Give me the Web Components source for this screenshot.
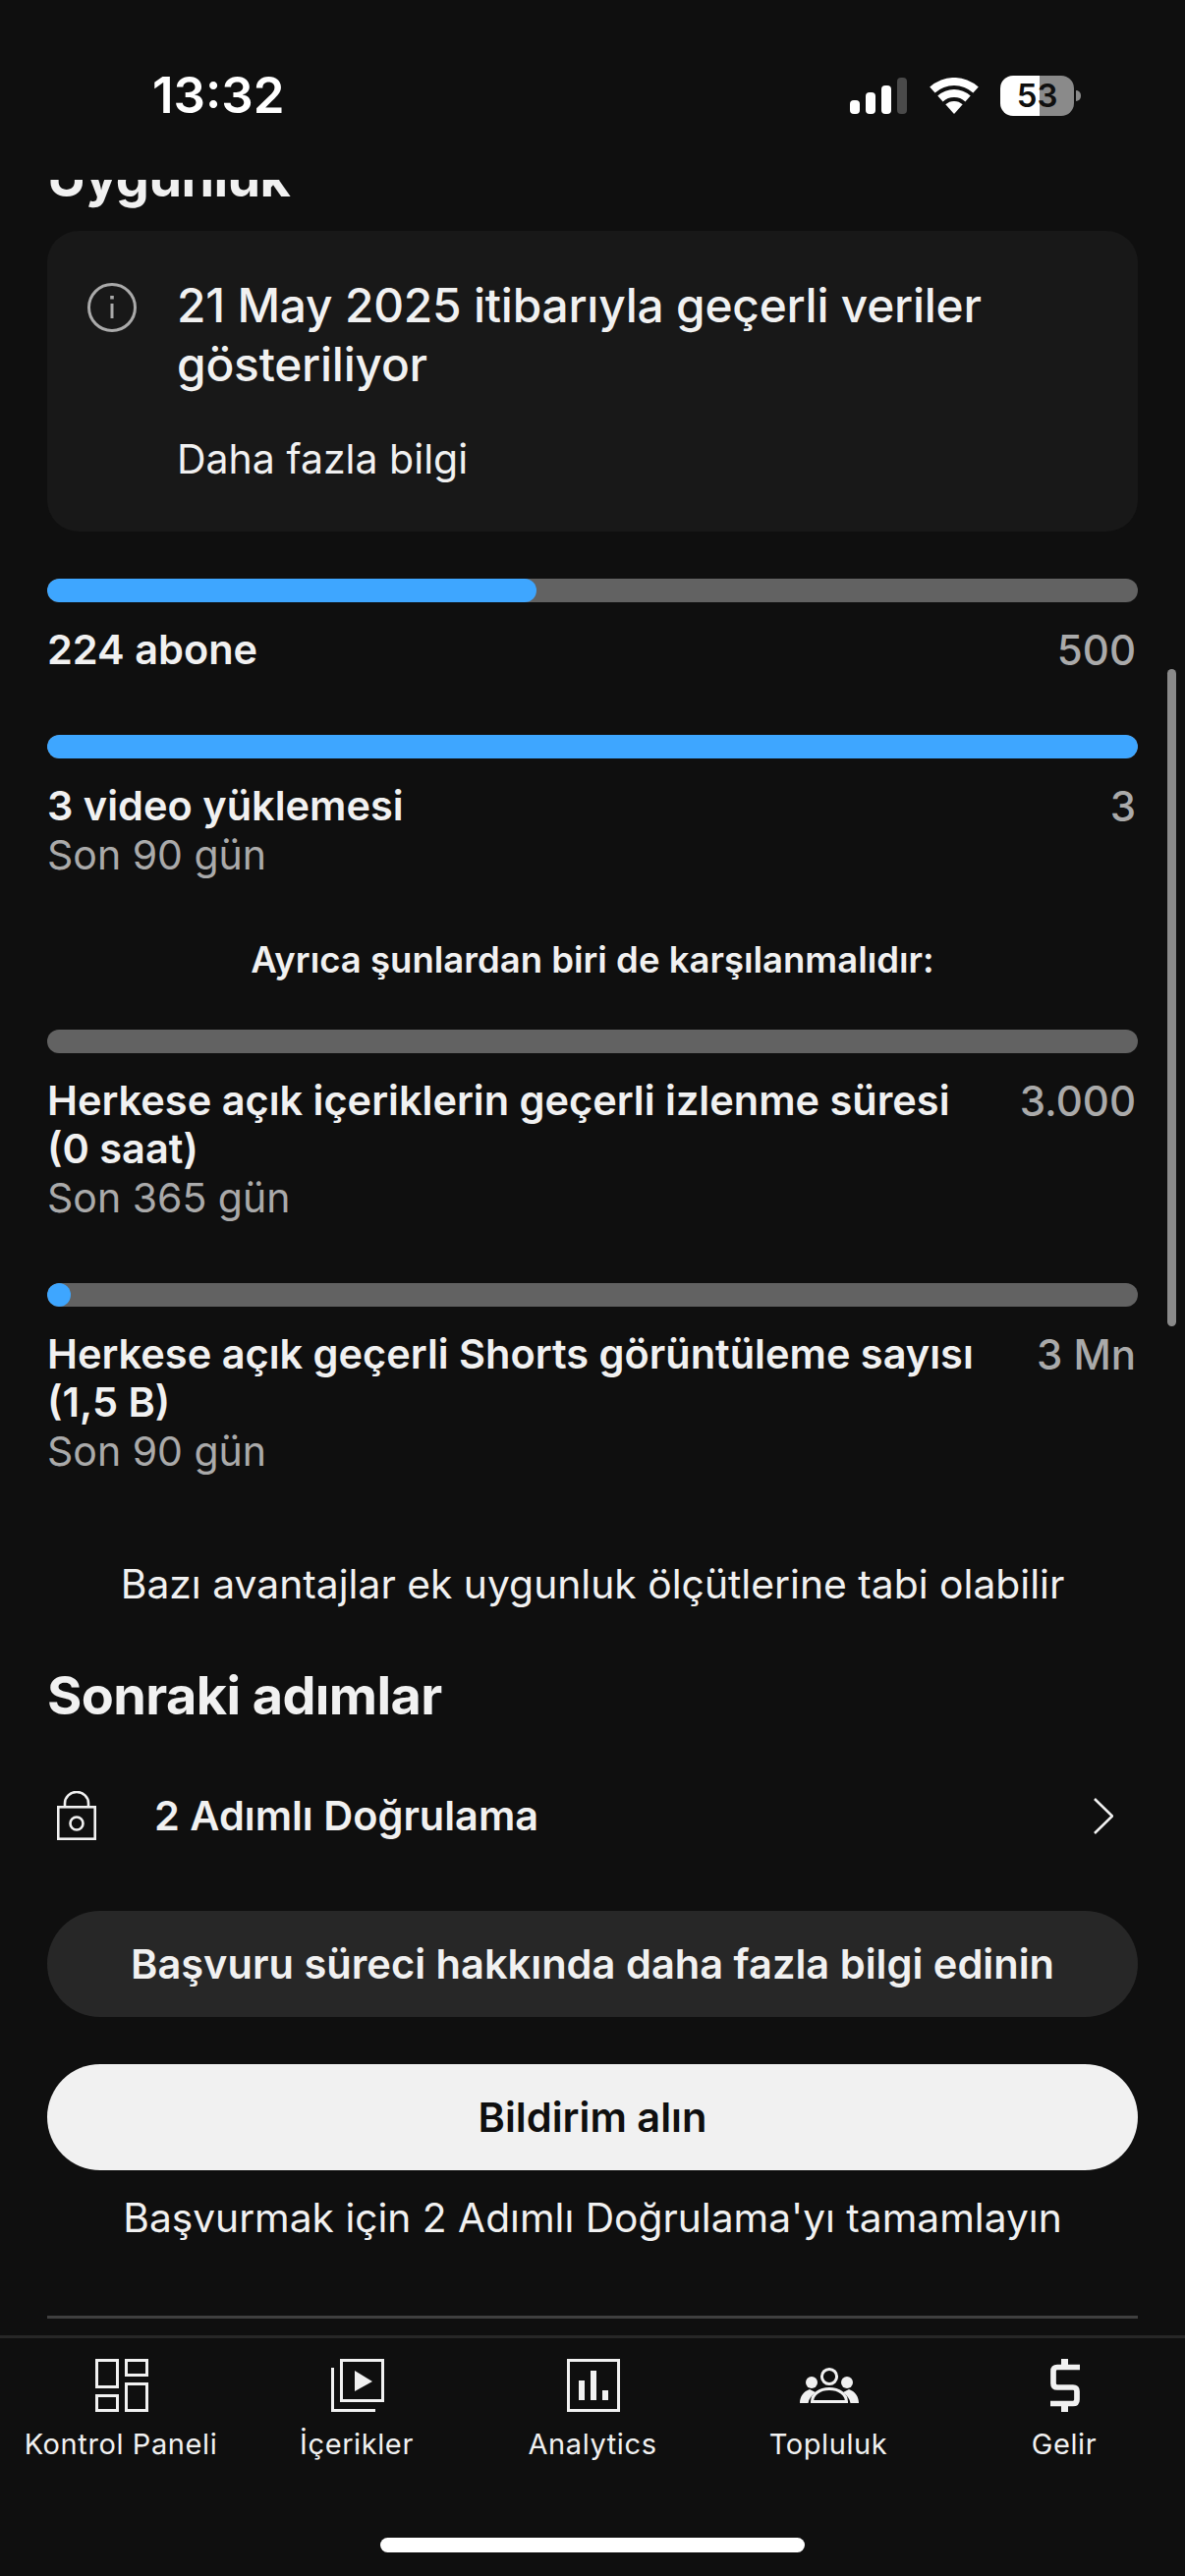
<!DOCTYPE html>
<html lang="tr">
<head>
<meta charset="utf-8">
<title>Uygunluk</title>
<style>
	html, body { margin: 0; padding: 0; background: #0f0f0f; }
	body { width: 1206px; height: 2622px; overflow: hidden; font-family: Inter, "Noto Sans", sans-serif; color: #f1f1f1; }
	app-screen { width: 1206px; height: 2622px; }
	.first { margin-top: 48px; }
	.row-gap { margin-top: 62px; }
	.also { margin-top: 57px; margin-bottom: 46px; }
	.perks { margin-top: 85px; }
	.next { margin-top: 59px; }
	.step { margin-top: 38px; }
	.btn-a { margin-top: 43px; }
	.btn-b { margin-top: 48px; }
	.hint { margin-top: 24px; }
	.rule { margin-top: 74px; }
</style>
</head>
<body>
<app-screen>
	<status-bar slot="top" time="13:32" battery="53"></status-bar>

	<section-title style="margin-top:-32px;margin-bottom:24px">Uygunluk</section-title>
	<info-card link="Daha fazla bilgi">21 May 2025 itibarıyla geçerli veriler gösteriliyor</info-card>

	<threshold-row class="first" fill="44.9%" max="500">224 abone</threshold-row>
	<threshold-row class="row-gap" fill="100%" max="3" sub="Son 90 gün">3 video yüklemesi</threshold-row>
	<center-note class="also" size="36.5" weight="600">Ayrıca şunlardan biri de karşılanmalıdır:</center-note>
	<threshold-row fill="0" max="3.000" sub="Son 365 gün">Herkese açık içeriklerin geçerli izlenme süresi (0 saat)</threshold-row>
	<threshold-row class="row-gap" fill="24px" max="3 Mn" sub="Son 90 gün">Herkese açık geçerli Shorts görüntüleme sayısı (1,5 B)</threshold-row>
	<center-note class="perks" size="40.8">Bazı avantajlar ek uygunluk ölçütlerine tabi olabilir</center-note>

	<section-title class="next">Sonraki adımlar</section-title>
	<action-row class="step">2 Adımlı Doğrulama</action-row>
	<pill-button class="btn-a" variant="dark">Başvuru süreci hakkında daha fazla bilgi edinin</pill-button>
	<pill-button class="btn-b" variant="light">Bildirim alın</pill-button>
	<center-note class="hint" size="40.7">Başvurmak için 2 Adımlı Doğrulama'yı tamamlayın</center-note>
	<hr-line class="rule"></hr-line>

	<bottom-nav slot="bottom">
		<nav-item label="Kontrol Paneli" icon="dashboard"></nav-item>
		<nav-item label="İçerikler" icon="content"></nav-item>
		<nav-item label="Analytics" icon="analytics"></nav-item>
		<nav-item label="Topluluk" icon="community"></nav-item>
		<nav-item label="Gelir" icon="earn"></nav-item>
	</bottom-nav>
</app-screen>

<script>
// page frame: status bar on top, scrolled content in the middle, nav at the bottom
class AppScreen extends HTMLElement {
	connectedCallback() {
		const shadow = this.attachShadow({ mode: 'open' });
		shadow.innerHTML = `
			<style>
				:host { display: flex; flex-direction: column; position: relative; background: #0f0f0f; }
				.scroll { flex: 1; min-height: 0; overflow: hidden; padding: 0 48px; display: flex; flex-direction: column; }
				.thumb { position: absolute; left: 1188px; top: 681px; width: 9px; height: 669px; border-radius: 5px; background: #8a8a8a; }
			</style>
			<slot name="top"></slot>
			<div class="scroll"><slot></slot></div>
			<div class="thumb"></div>
			<slot name="bottom"></slot>
		`;
	}
}
customElements.define('app-screen', AppScreen);

class StatusBar extends HTMLElement {
	connectedCallback() {
		const shadow = this.attachShadow({ mode: 'open' });
		shadow.innerHTML = `
			<style>
				:host { display: flex; align-items: center; box-sizing: border-box; height: 183px; padding: 11px 106px 0 155px; color: #fff; flex: none; }
				.time { font: 600 51px/60px Inter, sans-serif; }
				.icons { margin-left: auto; display: flex; align-items: center; }
				.wifi { margin-left: 23px; }
				.batt { position: relative; margin-left: 22px; width: 75px; height: 41px; border-radius: 13px; overflow: hidden; text-align: center;
					background: linear-gradient(90deg, #fff 0 40px, #8a8a8a 40px); color: #0f0f0f; font: 600 33px/41px Inter, sans-serif; }
				.nub { width: 5px; height: 11px; margin-left: 2px; background: #8a8a8a; border-radius: 0 6px 6px 0; }
			</style>
			<div class="time">${this.getAttribute('time')}</div>
			<div class="icons">
				<svg width="58" height="37" viewBox="0 0 58 37">
					<rect x="0" y="23" width="10" height="14" rx="4" fill="#fff"/>
					<rect x="16" y="15" width="10" height="22" rx="4" fill="#fff"/>
					<rect x="32" y="8" width="10" height="29" rx="4" fill="#fff"/>
					<rect x="48" y="0" width="10" height="37" rx="4" fill="#4a4a4a"/>
				</svg>
				<svg class="wifi" width="50" height="37" viewBox="0 0 50 37" fill="#fff">
					<path d="M.2 9.5A37 37 0 0 1 49.8 9.5L44.4 15.5A29 29 0 0 0 5.6 15.5Z"/>
					<path d="M8.3 18.4A25 25 0 0 1 41.7 18.4L36.4 24.4A17 17 0 0 0 13.6 24.4Z"/>
					<path d="M16.3 27.3A13 13 0 0 1 33.7 27.3L25 37Z"/>
				</svg>
				<div class="batt">${this.getAttribute('battery')}</div>
				<div class="nub"></div>
			</div>
		`;
	}
}
customElements.define('status-bar', StatusBar);

class SectionTitle extends HTMLElement {
	connectedCallback() {
		const shadow = this.attachShadow({ mode: 'open' });
		shadow.innerHTML = `
			<style>
				:host { display: block; flex: none; font: 700 54px/60px Inter, sans-serif; letter-spacing: -.6px; color: #f1f1f1; }
			</style>
			<slot></slot>
		`;
	}
}
customElements.define('section-title', SectionTitle);

class InfoCard extends HTMLElement {
	connectedCallback() {
		const shadow = this.attachShadow({ mode: 'open' });
		shadow.innerHTML = `
			<style>
				:host { display: flex; flex: none; box-sizing: border-box; height: 306px; padding: 46px 60px 0 41px; gap: 41px; background: #181818; border-radius: 32px; }
				svg { flex: none; margin-top: 7px; }
				.title { font: 500 47.8px/60px Inter, sans-serif; letter-spacing: -.2px; color: #f1f1f1; }
				.link { margin-top: 41px; font: 400 41px/50px Inter, sans-serif; color: #f1f1f1; }
			</style>
			<svg width="50" height="50" viewBox="0 0 50 50" fill="none" stroke="#aaa" stroke-width="3">
				<circle cx="25" cy="25" r="23.5"/>
				<path d="M25 21V36"/>
				<path d="M25 13V16.5" stroke-width="3.6"/>
			</svg>
			<div>
				<div class="title"><slot></slot></div>
				<div class="link">${this.getAttribute('link')}</div>
			</div>
		`;
	}
}
customElements.define('info-card', InfoCard);

// progress bar with its label, the max value and an optional period below
class ThresholdRow extends HTMLElement {
	connectedCallback() {
		const shadow = this.attachShadow({ mode: 'open' });
		const sub = this.getAttribute('sub');
		shadow.innerHTML = `
			<style>
				:host { display: block; flex: none; }
				.track { height: 24px; border-radius: 12px; background: #626262; overflow: hidden; }
				.fill { height: 100%; border-radius: 12px; background: #3ea6ff; }
				.info { display: flex; justify-content: space-between; gap: 46px; margin-top: 24px; }
				.label { font: 600 41.5px/49px Inter, sans-serif; color: #f1f1f1; }
				.max { flex: none; font: 500 42px/49px Inter, sans-serif; color: #aaa; padding-right: 2px; }
				.sub { font: 400 41px/50px Inter, sans-serif; color: #aaa; }
			</style>
			<div class="track"><div class="fill" style="width:${this.getAttribute('fill')}"></div></div>
			<div class="info">
				<div class="label"><slot></slot></div>
				<div class="max">${this.getAttribute('max')}</div>
			</div>
			${sub ? `<div class="sub">${sub}</div>` : ''}
		`;
	}
}
customElements.define('threshold-row', ThresholdRow);

class CenterNote extends HTMLElement {
	connectedCallback() {
		const shadow = this.attachShadow({ mode: 'open' });
		const size = this.getAttribute('size') || 40;
		const weight = this.getAttribute('weight') || 400;
		shadow.innerHTML = `
			<style>
				:host { display: block; flex: none; text-align: center; font: ${weight} ${size}px/50px Inter, sans-serif; color: #f1f1f1; }
			</style>
			<slot></slot>
		`;
	}
}
customElements.define('center-note', CenterNote);

class ActionRow extends HTMLElement {
	connectedCallback() {
		const shadow = this.attachShadow({ mode: 'open' });
		shadow.innerHTML = `
			<style>
				:host { display: flex; flex: none; align-items: center; height: 108px; padding-left: 10px; font: 600 41.5px/50px Inter, sans-serif; color: #f1f1f1; }
				.lock { flex: none; margin-right: 59px; }
				.text { flex: 1; }
				.chev { flex: none; margin-right: 25px; }
			</style>
			<svg class="lock" width="40" height="50" viewBox="0 0 40 50" fill="none" stroke="#f1f1f1" stroke-width="2.6">
				<rect x="1.3" y="16.3" width="37.4" height="32.4"/>
				<path d="M8 16V12.5A12 11.5 0 0 1 32 12.5V16"/>
				<circle cx="20" cy="33" r="6.5"/>
			</svg>
			<div class="text"><slot></slot></div>
			<svg class="chev" width="20" height="37" viewBox="0 0 20 37" fill="none" stroke="#f1f1f1" stroke-width="2.6">
				<path d="M1 1L19 18.5L1 36"/>
			</svg>
		`;
	}
}
customElements.define('action-row', ActionRow);

class PillButton extends HTMLElement {
	connectedCallback() {
		const shadow = this.attachShadow({ mode: 'open' });
		shadow.innerHTML = `
			<style>
				:host { display: flex; flex: none; align-items: center; justify-content: center; height: 108px; border-radius: 54px; font: 600 41.6px/50px Inter, sans-serif; }
				:host([variant="dark"]) { background: #272727; color: #f1f1f1; }
				:host([variant="light"]) { background: #f1f1f1; color: #0f0f0f; }
			</style>
			<slot></slot>
		`;
	}
}
customElements.define('pill-button', PillButton);

class HrLine extends HTMLElement {
	connectedCallback() {
		const shadow = this.attachShadow({ mode: 'open' });
		shadow.innerHTML = `<style>:host { display: block; flex: none; height: 3px; background: #3f3f3f; }</style>`;
	}
}
customElements.define('hr-line', HrLine);

class BottomNav extends HTMLElement {
	connectedCallback() {
		const shadow = this.attachShadow({ mode: 'open' });
		shadow.innerHTML = `
			<style>
				:host { display: block; flex: none; box-sizing: border-box; height: 245px; border-top: 3px solid #272727; background: #0f0f0f; position: relative; z-index: 1; }
				.items { display: grid; grid-template-columns: repeat(5, 240px); padding: 21px 3px 0; }
				.home { width: 432px; height: 15px; margin: 77px auto 0; border-radius: 8px; background: #fff; }
			</style>
			<div class="items"><slot></slot></div>
			<div class="home"></div>
		`;
	}
}
customElements.define('bottom-nav', BottomNav);

const NAV_ICONS = {
	dashboard: `<g fill="none" stroke="#f1f1f1" stroke-width="3">
		<rect x="16.5" y="1.5" width="21" height="27"/><rect x="46.5" y="1.5" width="21" height="15"/>
		<rect x="16.5" y="37.5" width="21" height="15"/><rect x="46.5" y="25.5" width="21" height="27"/></g>`,
	content: `<g fill="none" stroke="#f1f1f1" stroke-width="3">
		<rect x="25.5" y="1.5" width="42" height="41"/><path d="M16.5 9V52.5H60"/></g>
		<path d="M39 12L57 23L39 33Z" fill="#f1f1f1"/>`,
	analytics: `<rect x="16.5" y="1.5" width="51" height="51" fill="none" stroke="#f1f1f1" stroke-width="3"/>
		<g fill="#f1f1f1"><rect x="27" y="22" width="6" height="20"/><rect x="39" y="12" width="6" height="30"/><rect x="51" y="32" width="6" height="10"/></g>`,
	community: `<g transform="translate(12 9)">
		<circle cx="30" cy="9" r="7.6" fill="none" stroke="#f1f1f1" stroke-width="3"/>
		<path d="M12.5 34.5C12.5 27 20 21.5 30 21.5S47.5 27 47.5 34.5Z" fill="none" stroke="#f1f1f1" stroke-width="3"/>
		<g fill="#f1f1f1"><circle cx="12" cy="15" r="6"/><circle cx="48" cy="15" r="6"/>
		<path d="M0 36C0 29 4 24 10 22L16 25C12 28 9 32 8.5 36Z"/>
		<path d="M60 36C60 29 56 24 50 22L44 25C48 28 51 32 51.5 36Z"/></g></g>`,
	earn: `<g transform="translate(27 0)"><path d="M30 8.5H7Q3 8.5 3 12.5V25Q3 29 7 29H23Q27 29 27 33V41.5Q27 45.5 23 45.5H0" fill="none" stroke="#f1f1f1" stroke-width="5.7"/>
		<rect x="11" y="0" width="7" height="7" fill="#f1f1f1"/><rect x="11" y="47" width="7" height="7" fill="#f1f1f1"/></g>`
};

class NavItem extends HTMLElement {
	connectedCallback() {
		const shadow = this.attachShadow({ mode: 'open' });
		shadow.innerHTML = `
			<style>
				:host { display: flex; flex-direction: column; align-items: center; gap: 15px; }
				svg { display: block; }
				span { font: 400 29px/36px Inter, sans-serif; letter-spacing: .6px; color: #f1f1f1; white-space: nowrap; }
			</style>
			<svg width="82" height="54" viewBox="0 0 82 54">${NAV_ICONS[this.getAttribute('icon')]}</svg>
			<span>${this.getAttribute('label')}</span>
		`;
	}
}
customElements.define('nav-item', NavItem);
</script>
</body>
</html>
